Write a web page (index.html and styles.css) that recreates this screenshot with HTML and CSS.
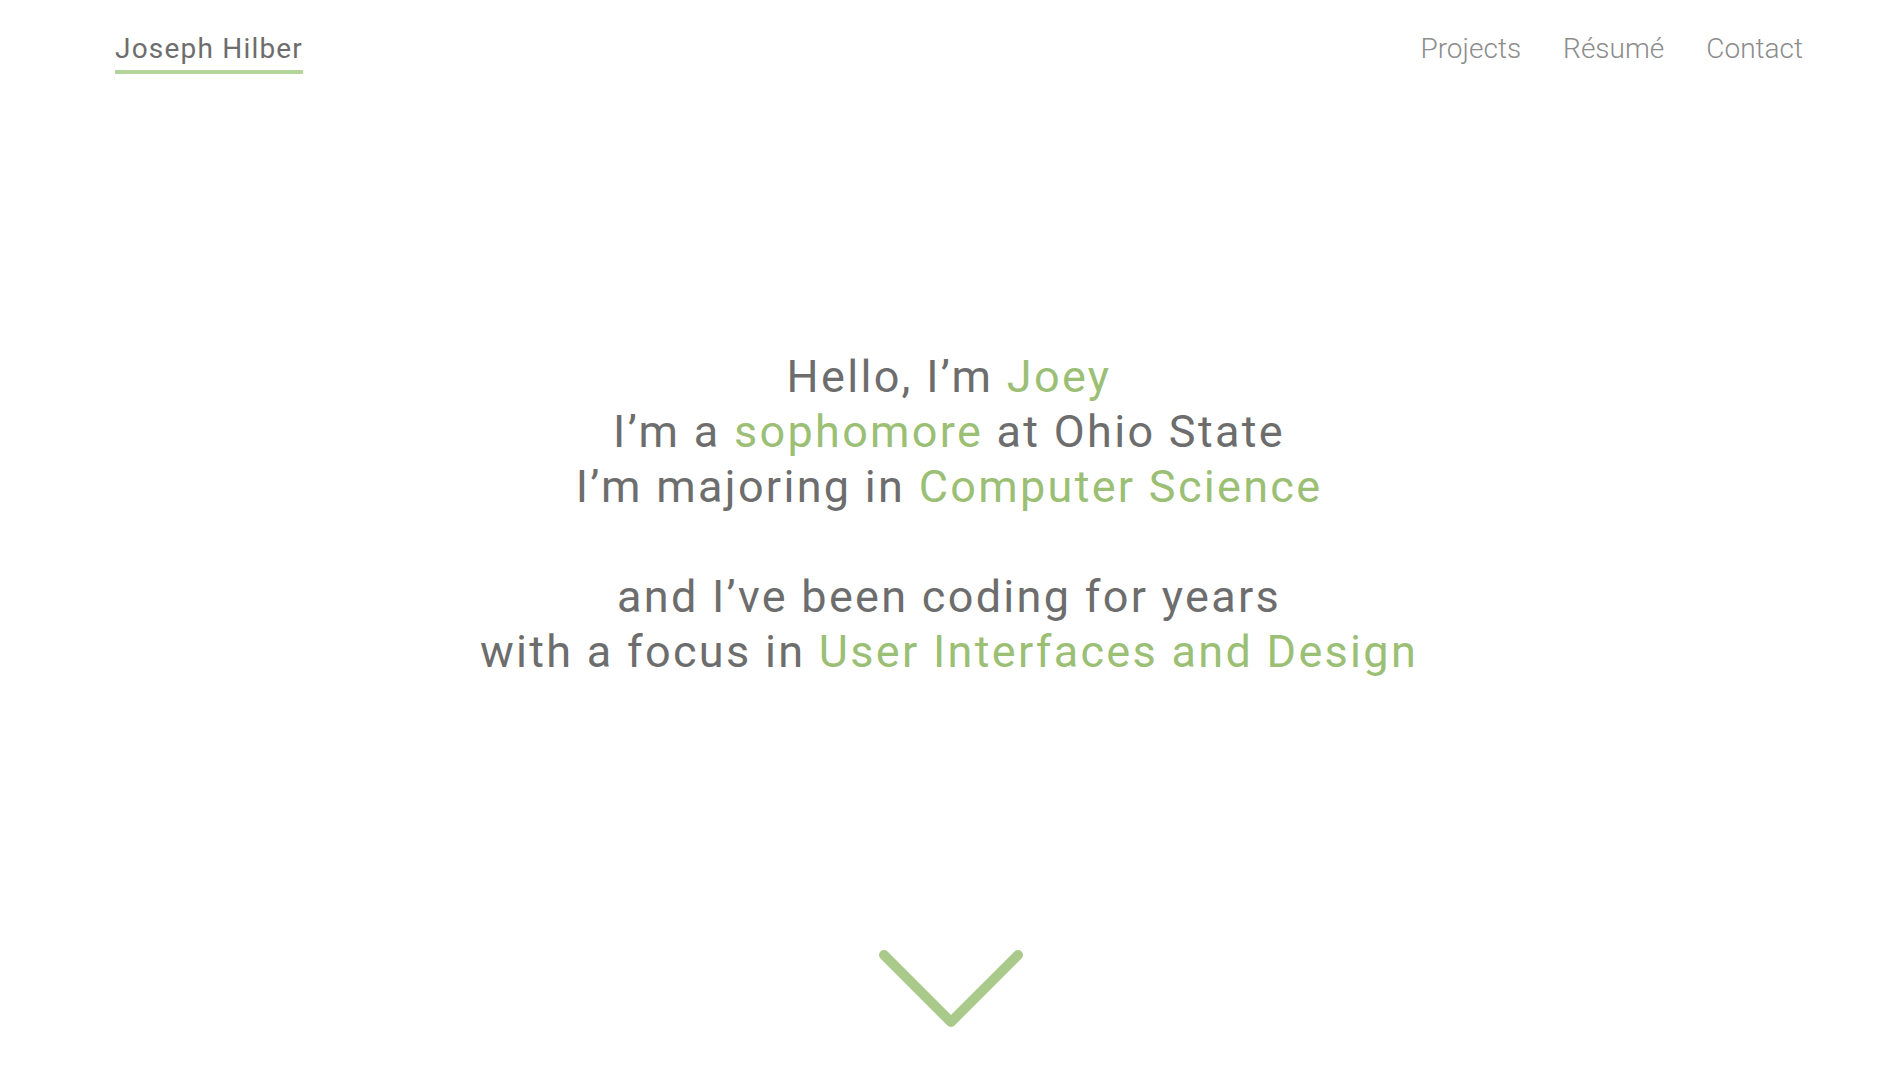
FILE: index.html
```html
<!DOCTYPE html>
<html lang="en">
<head>
<meta charset="utf-8">
<title>Joseph Hilber</title>
<link rel="stylesheet" href="styles.css">
</head>
<body>
<div class="page">
  <header class="site-header">
    <a class="logo" href="#">Joseph Hilber</a>
    <nav class="nav">
      <a href="#">Projects</a>
      <a href="#">Résumé</a>
      <a href="#">Contact</a>
    </nav>
  </header>
  <main class="hero">
    <p class="intro">
      Hello, I’m <span class="hl">Joey</span><br>
      I’m a <span class="hl">sophomore</span> at Ohio State<br>
      I’m majoring in <span class="hl">Computer Science</span><br>
      <br>
      and I’ve been coding for years<br>
      with a focus in <span class="hl">User Interfaces and Design</span>
    </p>
  </main>
  <div class="scroll">
    <svg class="chevron" width="150" height="90" viewBox="0 0 150 90" aria-hidden="true">
      <polyline points="8,8 75,75 142,8" fill="none" stroke="#aaca8b" stroke-width="10" stroke-linecap="round" stroke-linejoin="round"/>
    </svg>
  </div>
</div>
</body>
</html>
```

FILE: styles.css
```css
html, body {
  margin: 0;
  padding: 0;
  background: #ffffff;
}

body {
  font-family: Roboto, "Noto Sans", "Liberation Sans", sans-serif;
  color: #6d6d6d;
}

.page {
  height: 1080px;
  display: flex;
  flex-direction: column;
}

.site-header {
  display: flex;
  justify-content: space-between;
  align-items: flex-start;
  padding: 31px 95px 0 115px;
}

.logo {
  color: #6d6d6d;
  text-decoration: none;
  font-size: 28px;
  line-height: 36px;
  letter-spacing: 1.2px;
  padding-bottom: 3px;
  border-bottom: 4px solid #b5d49a;
}

.nav {
  display: flex;
  gap: 42px;
}

.nav a {
  color: #8c8c8c;
  font-weight: 300;
  text-decoration: none;
  font-size: 28px;
  line-height: 36px;
}

.hero {
  margin-top: 275px;
  display: flex;
  justify-content: center;
}

.intro {
  margin: 0;
  text-align: center;
  font-size: 45px;
  line-height: 55px;
  letter-spacing: 2.3px;
  color: #6d6d6d;
}

.hl {
  color: #9bbf75;
}

.scroll {
  margin-top: auto;
  display: flex;
  justify-content: center;
  padding-bottom: 43px;
  padding-left: 4px;
}

.chevron {
  display: block;
}
```
